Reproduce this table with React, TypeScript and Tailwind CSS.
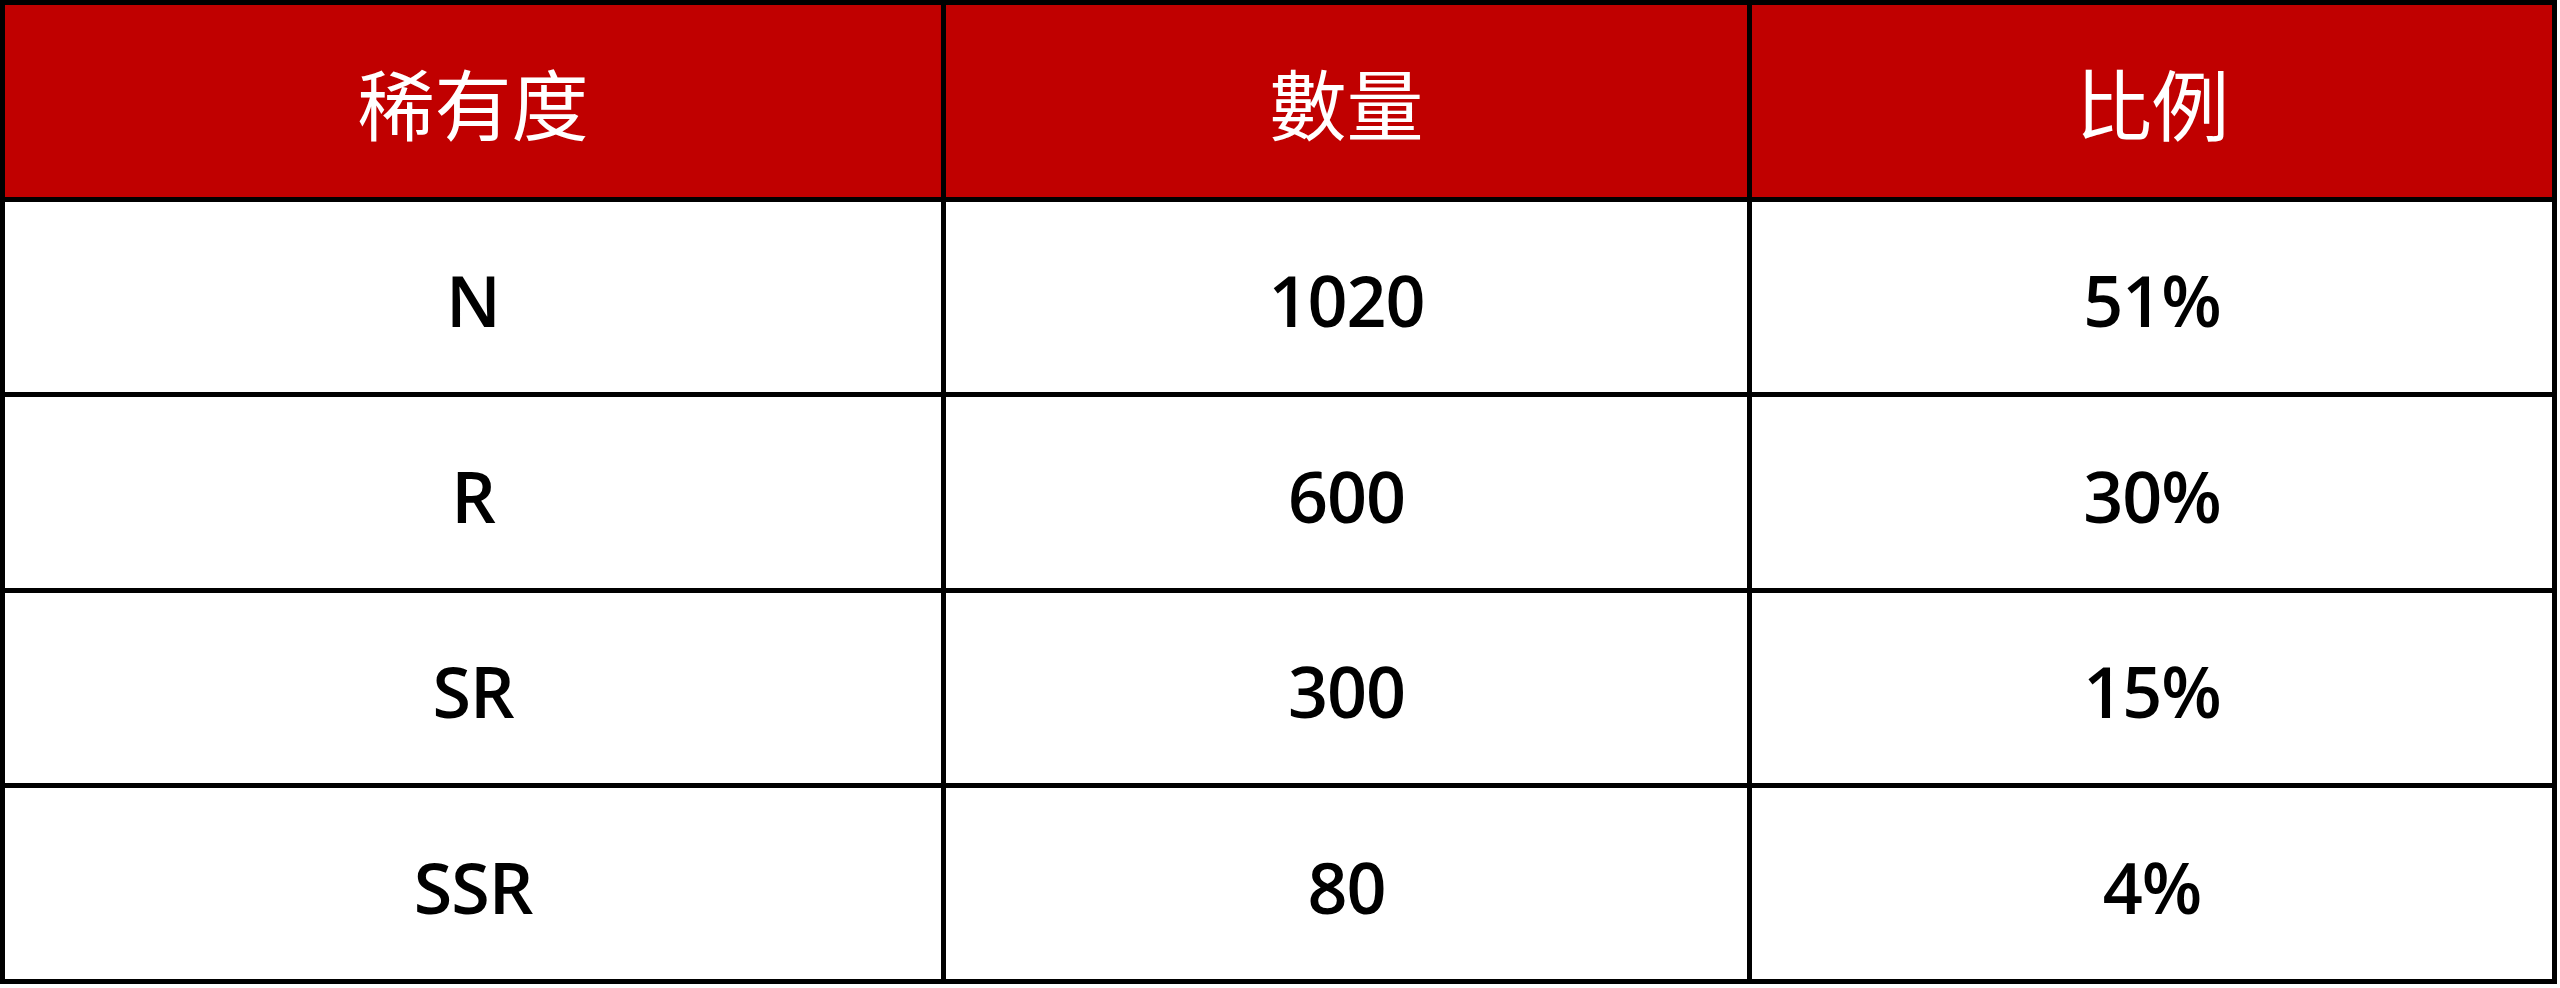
import React from "react";

const rows = [
  ["N", "1020", "51%"],
  ["R", "600", "30%"],
  ["SR", "300", "15%"],
  ["SSR", "80", "4%"],
];

const headers = ["稀有度", "數量", "比例"];

export default function App() {
  return (
    <div className="w-[2560px] h-[988px] bg-white">
      <div className="w-[2557px] grid grid-cols-[936px_801px_800px] grid-rows-[192px_190px_191px_190px_191px] gap-[5px] p-[5px] bg-black">
        {headers.map((h) => (
          <div
            key={h}
            className="bg-[#c00000] text-white flex items-center justify-center text-[77px] leading-none"
            style={{ fontFamily: '"Noto Sans CJK TC", "Noto Sans CJK SC", serif' }}
          >
            {h}
          </div>
        ))}
        {rows.map((r) =>
          r.map((c, i) => (
            <div
              key={r[0] + i}
              className="bg-white text-black flex items-center justify-center pt-[6px] text-[70px] leading-none font-semibold tracking-[-1px]"
              style={{ fontFamily: '"Open Sans", Lato, sans-serif' }}
            >
              {c}
            </div>
          ))
        )}
      </div>
    </div>
  );
}
